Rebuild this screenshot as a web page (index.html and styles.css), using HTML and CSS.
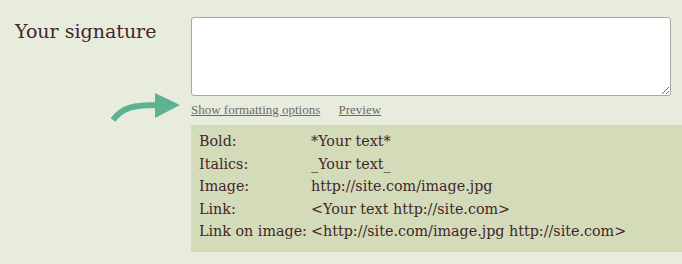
FILE: index.html
```html
<!DOCTYPE html>
<html lang="en">
<head>
    <meta charset="UTF-8">
    <title>Signature</title>
    <link rel="stylesheet" href="styles.css">
</head>
<body>
    <div class="row">
        <label class="label" for="signature">Your signature</label>
        <div class="field">
            <textarea id="signature" class="sig-input"></textarea>
            <div class="links">
                <svg class="arrow" width="72" height="30" viewBox="0 0 72 30">
                    <path d="M4 27 C14 14 24 12 50 12" fill="none" stroke="#5db391" stroke-width="6"/>
                    <polygon points="46,0 71,12 46,25" fill="#5db391"/>
                </svg>
                <a href="#">Show formatting options</a>
                <a href="#">Preview</a>
            </div>
            <!-- Formatting help -->
            <table class="help">
                <tr><td>Bold:</td><td>*Your text*</td></tr>
                <tr><td>Italics:</td><td>_Your text_</td></tr>
                <tr><td>Image:</td><td>http://site.com/image.jpg</td></tr>
                <tr><td>Link:</td><td>&lt;Your text http://site.com&gt;</td></tr>
                <tr><td>Link on image:</td><td>&lt;http://site.com/image.jpg http://site.com&gt;</td></tr>
            </table>
        </div>
    </div>
</body>
</html>
```

FILE: styles.css
```css
body {
    margin: 0;
    background-color: #e8ecdc;
    font-family: "DejaVu Serif", "Liberation Serif", serif;
    color: #42262c;
}
.row {
    display: flex;
    padding-top: 17px;
}
.label {
    width: 191px;
    box-sizing: border-box;
    padding-left: 15px;
    font-size: 19px;
    line-height: 28px;
}
.field {
    flex: 1;
}
.sig-input {
    display: block;
    width: 480px;
    height: 79px;
    box-sizing: border-box;
    border: 1px solid #a9a9a4;
    border-radius: 3px;
    background: #fff;
    margin: 0;
}
.links {
    position: relative;
    font-family: "Liberation Serif", serif;
    font-size: 13px;
    line-height: 16px;
    padding: 6px 0 7px;
}
.links a {
    color: #6b6b6b;
    margin-right: 15px;
}
.arrow {
    position: absolute;
    left: -82px;
    top: -3px;
}
.help {
    width: 100%;
    background-color: #d4dbb8;
    border-collapse: collapse;
    font-size: 14.3px;
    line-height: 22.5px;
}
.help tr:first-child td {
    padding-top: 5px;
}
.help tr:last-child td {
    padding-bottom: 9px;
}
.help td {
    padding: 0;
    white-space: nowrap;
}
.help td:first-child {
    width: 112px;
    padding-left: 8px;
}
```
